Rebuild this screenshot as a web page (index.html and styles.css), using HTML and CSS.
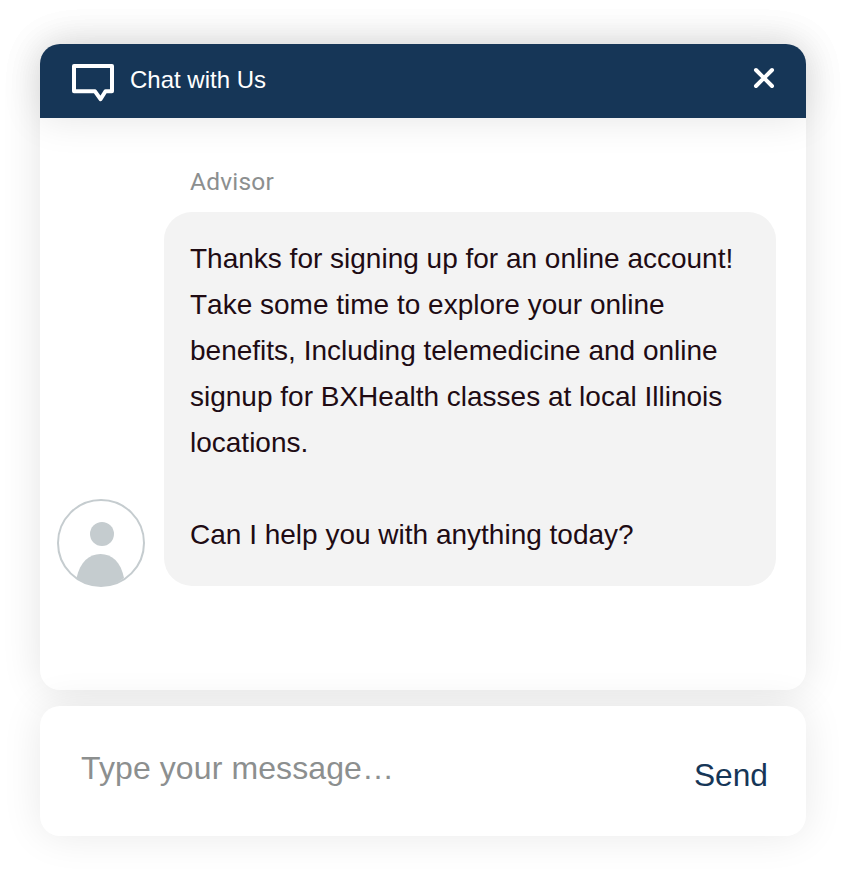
FILE: index.html
```html
<!DOCTYPE html>
<html lang="en">
<head>
<meta charset="utf-8">
<title>Chat with Us</title>
<link rel="stylesheet" href="styles.css">
</head>
<body>
<main class="widget">
  <section class="chat">
    <header class="chat-header">
      <svg class="chat-icon" width="42" height="38" viewBox="0 0 42 38"><path d="M2 2H40V27.3H33.5L28.5 35.2L23 27.3H2Z" fill="none" stroke="#fff" stroke-width="4" stroke-linejoin="round"/></svg>
      <h1 class="title">Chat with Us</h1>
      <button class="close" aria-label="Close"><svg width="22" height="22" viewBox="0 0 22 22"><path d="M3 3L19 19M19 3L3 19" stroke="#fff" stroke-width="4" stroke-linecap="round"/></svg></button>
    </header>
    <div class="messages">
      <p class="sender">Advisor</p>
      <div class="row">
        <svg class="avatar" width="88" height="88" viewBox="0 0 88 88"><circle cx="44" cy="44" r="43" fill="#fff" stroke="#c5cccf" stroke-width="2"/><circle cx="45" cy="35" r="12" fill="#c5cccf"/><path d="M19.5 79C23 63 32 55 43.5 55S64 63 67 79Q57 87 44 87T19.5 79Z" fill="#c5cccf"/></svg>
        <div class="bubble">
          <p>Thanks for signing up for an online account!<br>Take some time to explore your online<br>benefits, Including telemedicine and online<br>signup for BXHealth classes at local Illinois<br>locations.</p>
          <p class="question">Can I help you with anything today?</p>
        </div>
      </div>
    </div>
  </section>
  <section class="composer">
    <span class="placeholder">Type your message…</span>
    <button class="send">Send</button>
  </section>
</main>
</body>
</html>
```
FILE: styles.css
```css
* { box-sizing: border-box; }
body { margin: 0; background: #fff; font-family: "Liberation Sans", Arial, sans-serif; }
h1, p { margin: 0; }
button { border: 0; background: none; padding: 0; font: inherit; }
.widget { display: flex; flex-direction: column; gap: 16px; padding: 44px 40px 36px; }
.chat, .composer { border-radius: 20px; background: #fff; box-shadow: 0 0 40px rgba(0, 0, 0, .11); }
.composer { box-shadow: 0 0 40px rgba(0, 0, 0, .09); }
.chat { height: 646px; }
.chat-header { display: flex; align-items: flex-start; height: 74px; padding: 20px 31px 0 32px; border-radius: 20px 20px 0 0; background: #163657; box-shadow: 0 0 40px rgba(0, 0, 0, .11); }
.title { margin: 2px 0 0 16px; font-size: 24px; line-height: 28px; font-weight: 400; color: #fff; }
.close { margin: 3px 0 0 auto; height: 22px; }
.close svg, .avatar { display: block; }
.messages { padding: 50px 30px 0 17px; }
.sender { margin-left: 133px; font: 24.5px/28px Roboto, sans-serif; letter-spacing: .2px; color: #8c8f8f; }
.row { display: flex; align-items: flex-end; gap: 19px; margin-top: 16px; }
.avatar { flex: none; margin-bottom: -1px; }
.bubble { width: 612px; height: 374px; padding: 24px 26px; border-radius: 28px; background: #f3f3f3; color: #200b13; font-size: 28px; line-height: 46px; font-kerning: none; white-space: nowrap; }
.question { margin-top: 46px; }
.composer { display: flex; justify-content: space-between; height: 130px; padding: 43px 38px 0 41px; }
.placeholder { font-size: 32px; line-height: 38px; letter-spacing: .1px; color: #8c8f8f; }
.send { margin-top: 7px; height: 38px; font-size: 31.7px; line-height: 38px; color: #163657; }
```
